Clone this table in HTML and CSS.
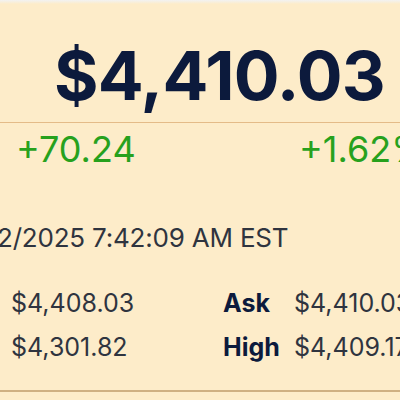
FILE: index.html
```html
<!DOCTYPE html>
<html>
<head>
<meta charset="utf-8">
<link rel="stylesheet" href="styles.css">
</head>
<body>
<div class="topbar"></div>
<main class="quote">
  <div class="price-wrap"><div class="price">$4,410.03</div></div>
  <div class="change">
    <span class="chg">+70.24</span>
    <span class="pct">+1.62%</span>
  </div>
  <div class="time">2/2025 7:42:09 AM EST</div>
  <div class="stats">
    <span class="val">$4,408.03</span>
    <span class="lbl">Ask</span>
    <span class="val">$4,410.03</span>
    <span class="val">$4,301.82</span>
    <span class="lbl">High</span>
    <span class="val">$4,409.17</span>
  </div>
</main>
</body>
</html>
```
FILE: styles.css
```css
html, body {
  margin: 0;
  padding: 0;
  width: 400px;
  height: 400px;
  overflow: hidden;
  background: #fdecc9;
  font-family: Inter, "Noto Sans", sans-serif;
}
.topbar {
  height: 4px;
  background: linear-gradient(#f2f2f2, #fdecc9);
}
.quote {
  display: flex;
  flex-direction: column;
  width: 460px;
}
.price-wrap {
  height: 88px;
  padding: 30px 0 0 54px;
  border-bottom: 1px solid #e4bb88;
}
.price {
  font-size: 68px;
  line-height: 82px;
  font-weight: 700;
  color: #0c1a3c;
  letter-spacing: -0.8px;
}
.change {
  display: grid;
  grid-template-columns: 283px auto;
  padding: 5px 0 0 16px;
  font-size: 36px;
  line-height: 43px;
  color: #27a11d;
  letter-spacing: 0;
}
.time {
  margin: 51px 0 0 -3px;
  font-size: 26px;
  line-height: 31px;
  color: #2f343f;
  letter-spacing: -0.2px;
}
.stats {
  display: grid;
  grid-template-columns: 212px 71px auto;
  row-gap: 14px;
  margin-top: 35px;
  padding: 0 0 28px 11px;
  font-size: 25px;
  line-height: 30px;
  border-bottom: 2px solid #cfb082;
}
.val { color: #2f343f; }
.lbl { color: #0c1a3c; font-weight: 700; }
```
